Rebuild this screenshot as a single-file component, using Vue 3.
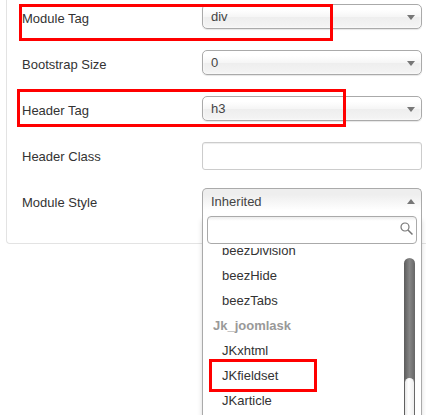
<template>
  <main class="page">
    <form class="panel" @submit.prevent>
      <div v-for="field in fields" :key="field.id" class="row">
        <label :for="field.id">{{ field.label }}</label>
        <div class="control">
          <select :id="field.id" v-model="field.value">
            <option>{{ field.value }}</option>
          </select>
          <svg class="arrow" width="8" height="5" viewBox="0 0 8 5">
            <path d="M0 0h8L4 5z" fill="#777" />
          </svg>
        </div>
        <span v-if="field.mark" :class="['mark', field.mark]"></span>
      </div>

      <div class="row">
        <label for="header-class">Header Class</label>
        <div class="control">
          <input id="header-class" v-model="headerClass" type="text" class="text-input" />
        </div>
      </div>

      <div class="row">
        <label for="module-style">Module Style</label>
        <div class="control">
          <button
            id="module-style"
            type="button"
            :class="['chosen', { open }]"
            :aria-expanded="open"
            @click="open = !open"
          >
            {{ selected }}
          </button>
          <svg class="arrow" width="8" height="5" viewBox="0 0 8 5">
            <path :d="open ? 'M0 5h8L4 0z' : 'M0 0h8L4 5z'" fill="#777" />
          </svg>

          <div v-if="open" class="drop">
            <div class="search">
              <input v-model="query" type="text" aria-label="Search styles" />
              <svg width="14" height="14" viewBox="0 0 14 14" fill="none" stroke="#777">
                <circle cx="5" cy="5" r="4" stroke-width="1.2" />
                <path d="M8 8l4.5 4.5" stroke-width="1.5" />
              </svg>
            </div>
            <div class="results">
              <ul>
                <li
                  v-for="item in results"
                  :key="item.text"
                  :class="item.group ? 'group' : 'option'"
                  @click="pick(item)"
                >
                  {{ item.text }}
                  <span v-if="item.marked" class="mark mark-option"></span>
                </li>
              </ul>
              <div class="track">
                <div class="thumb"></div>
              </div>
            </div>
          </div>
        </div>
      </div>
    </form>
  </main>
</template>

<script setup>
import { computed, ref } from 'vue';

const fields = ref([
  { id: 'module-tag', label: 'Module Tag', value: 'div', mark: 'mark-module' },
  { id: 'bootstrap-size', label: 'Bootstrap Size', value: '0' },
  { id: 'header-tag', label: 'Header Tag', value: 'h3', mark: 'mark-header' }
]);

const headerClass = ref('');
const selected = ref('Inherited');
const open = ref(true);
const query = ref('');

const items = [
  { text: 'beezDivision' },
  { text: 'beezHide' },
  { text: 'beezTabs' },
  { text: 'Jk_joomlask', group: true },
  { text: 'JKxhtml' },
  { text: 'JKfieldset', marked: true },
  { text: 'JKarticle' }
];

const results = computed(() =>
  items.filter((item) => item.text.toLowerCase().includes(query.value.toLowerCase()))
);

function pick(item) {
  if (item.group) return;
  selected.value = item.text;
  open.value = false;
}
</script>

<style>
body {
  margin: 0;
  background: #fff;
}
</style>

<style scoped>
.page {
  height: 100vh;
  overflow: hidden;
}

.panel {
  margin-left: 6px;
  padding: 4px 4px 9px 15px;
  border-left: 1px solid #e3e3e3;
  border-bottom: 1px solid #e3e3e3;
  border-bottom-left-radius: 4px;
  font-family: "Liberation Sans", Arial, sans-serif;
  font-size: 13px;
  line-height: 18px;
  color: #333;
}

.row {
  position: relative;
  display: flex;
  align-items: flex-start;
  min-height: 28px;
  margin-bottom: 18px;
}

label {
  flex: 0 0 180px;
  padding-top: 6px;
}

.control {
  position: relative;
  flex: 1;
}

select,
.chosen,
input {
  display: block;
  box-sizing: border-box;
  width: 100%;
  margin: 0;
  font: inherit;
  color: #444;
  outline: none;
}

select,
.chosen {
  appearance: none;
  height: 25px;
  padding: 0 24px 0 8px;
  border: 1px solid #aaa;
  border-radius: 5px;
  background: linear-gradient(#fff 20%, #f6f6f6 50%, #eee 52%, #f4f4f4 100%);
  box-shadow: inset 0 0 3px #fff, 0 1px 1px rgba(0, 0, 0, 0.1);
  text-align: left;
}

.chosen.open {
  height: 28px;
  padding-bottom: 2px;
  border-bottom: none;
  border-radius: 5px 5px 0 0;
  background: linear-gradient(#eee 20%, #fff 80%);
  box-shadow: none;
}

.arrow {
  position: absolute;
  top: 11px;
  right: 7px;
  pointer-events: none;
}

.text-input {
  height: 28px;
  padding: 4px 6px;
  border: 1px solid #ccc;
  border-radius: 3px;
  box-shadow: inset 0 1px 1px rgba(0, 0, 0, 0.075);
}

.drop {
  position: absolute;
  top: 28px;
  left: 0;
  right: 0;
  box-sizing: border-box;
  border: 1px solid #aaa;
  border-top: none;
  background: #fff;
  box-shadow: 0 4px 5px rgba(0, 0, 0, 0.15);
}

.search {
  position: relative;
  padding: 0 4px;
}

.search input {
  height: 28px;
  padding: 4px 24px 4px 6px;
  border: 1px solid #aaa;
  border-radius: 4px;
  background: linear-gradient(#eee 1%, #fff 15%);
}

.search svg {
  position: absolute;
  top: 6px;
  right: 7px;
}

.results {
  display: flex;
  height: 240px;
  margin-top: 4px;
  padding-right: 6px;
  overflow: hidden;
}

ul {
  flex: 1;
  margin: -10px 0 0;
  padding: 0;
  list-style: none;
}

li {
  position: relative;
  height: 25px;
  line-height: 25px;
  cursor: pointer;
}

.option {
  padding-left: 19px;
}

.group {
  padding-left: 10px;
  font-weight: bold;
  color: #999;
  cursor: default;
}

.track {
  box-sizing: border-box;
  width: 11px;
  margin-top: 10px;
  padding: 120px 1px 0;
  border-radius: 6px;
  background: linear-gradient(90deg, #5c5c5c, #858585 50%, #666);
}

.thumb {
  height: 100px;
  border-radius: 5px;
  background: linear-gradient(90deg, #e6e6e6, #fff 40%, #eee);
}

.mark {
  position: absolute;
  box-sizing: border-box;
  border: 3px solid #f00;
  pointer-events: none;
}

.mark-module {
  top: 0;
  left: -3px;
  width: 314px;
  height: 37px;
}

.mark-header {
  top: -7px;
  left: -5px;
  width: 329px;
  height: 38px;
}

.mark-option {
  top: -4px;
  left: 6px;
  width: 108px;
  height: 33px;
}
</style>
